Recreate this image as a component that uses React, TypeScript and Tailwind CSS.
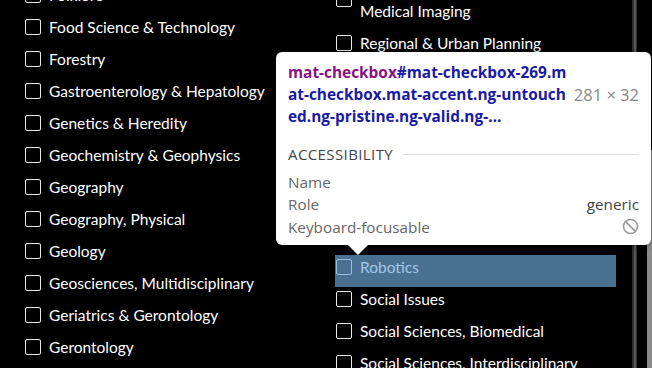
import React from 'react';

const left = [
  'Folklore',
  'Food Science & Technology',
  'Forestry',
  'Gastroenterology & Hepatology',
  'Genetics & Heredity',
  'Geochemistry & Geophysics',
  'Geography',
  'Geography, Physical',
  'Geology',
  'Geosciences, Multidisciplinary',
  'Geriatrics & Gerontology',
  'Gerontology',
];

const right = [
  'Regional & Urban Planning',
  'Rehabilitation',
  'Religion',
  'Remote Sensing',
  'Reproductive Biology',
  'Respiratory System',
  'Rheumatology',
  'Robotics',
  'Social Issues',
  'Social Sciences, Biomedical',
  'Social Sciences, Interdisciplinary',
];

function Box() {
  return <span className="mt-[4px] h-[16px] w-[16px] shrink-0 rounded-[2px] border-[1.5px] border-[#e8e8e8]" />;
}

function Row({ label, hl }: { label: React.ReactNode; hl?: boolean }) {
  return (
    <div className="relative flex gap-2 pb-[8px] pl-[1px]">
      <Box />
      <span className="whitespace-nowrap text-[15.5px] leading-[24px] text-white">{label}</span>
      {hl && <div className="absolute inset-0 bg-[rgba(111,168,220,0.66)]" />}
    </div>
  );
}

function Tooltip() {
  return (
    <div
      className="absolute left-[276px] top-[52px] w-[375px] rounded-[6px] bg-white px-[12px] pb-[7px] pt-[10px] shadow-[0_1px_6px_rgba(0,0,0,0.4)]"
      style={{ fontFamily: '"Open Sans", "Noto Sans", sans-serif' }}
    >
      <div className="flex items-center justify-between">
        <div className="whitespace-nowrap text-[15.4px] font-bold leading-[22px] text-[#1a1aa6]">
          <div>
            <span className="text-[#881280]">mat-checkbox</span>#mat-checkbox-269.m
          </div>
          <div>at-checkbox.mat-accent.ng-untouch</div>
          <div>ed.ng-pristine.ng-valid.ng-…</div>
        </div>
        <span className="whitespace-nowrap text-[16.5px] text-[#888]">281 × 32</span>
      </div>
      <div className="mt-[15px] flex items-center gap-[10px]">
        <span className="text-[15px] tracking-[0.4px] text-[#444]">ACCESSIBILITY</span>
        <div className="h-px flex-1 bg-[#ddd]" />
      </div>
      <div className="mt-[5px] text-[15.3px] leading-[22.5px] text-[#666]">
        <div>Name</div>
        <div className="flex justify-between">
          <span>Role</span>
          <span className="text-[#444]">generic</span>
        </div>
        <div className="flex items-center justify-between">
          <span>Keyboard-focusable</span>
          <svg width="17" height="17" viewBox="0 0 17 17" fill="none" stroke="#999" strokeWidth="1.6">
            <circle cx="8.5" cy="8.5" r="7" />
            <path d="M3.6 3.6 13.4 13.4" />
          </svg>
        </div>
      </div>
      <div className="absolute left-[72px] top-full h-0 w-0 border-x-[10px] border-t-[10px] border-x-transparent border-t-white" />
    </div>
  );
}

export default function App() {
  return (
    <div
      className="relative flex h-[368px] w-[652px] overflow-hidden bg-black"
      style={{ fontFamily: 'Lato, "Open Sans", sans-serif' }}
    >
      <div className="grid flex-1 grid-cols-[281px_281px] items-start gap-[30px] pl-[24px]">
        <div className="mt-[-17px] flex flex-col">
          {left.map((l) => (
            <Row key={l} label={l} />
          ))}
        </div>
        <div className="mt-[-25px] flex flex-col">
          <div className="flex items-center gap-2 pb-[8px] pl-[1px]">
            <span className="h-[16px] w-[16px] shrink-0 rounded-[2px] border-[1.5px] border-[#e8e8e8]" />
            <span className="text-[15.5px] leading-[24px] text-white">
              Radiology, Nuclear Medicine &amp;
              <br />
              Medical Imaging
            </span>
          </div>
          {right.map((r) => (
            <Row key={r} label={r} hl={r === 'Robotics'} />
          ))}
        </div>
      </div>
      <div className="flex w-[20px] shrink-0">
        <div className="flex h-full w-[5px] bg-[#2e2e2e]">
          <div className="ml-[2px] w-[2px] bg-[#5a5a5a]" />
        </div>
        <div className="ml-auto mt-[150px] w-[5px] bg-[#8a8a8a]" />
      </div>
      <Tooltip />
    </div>
  );
}
